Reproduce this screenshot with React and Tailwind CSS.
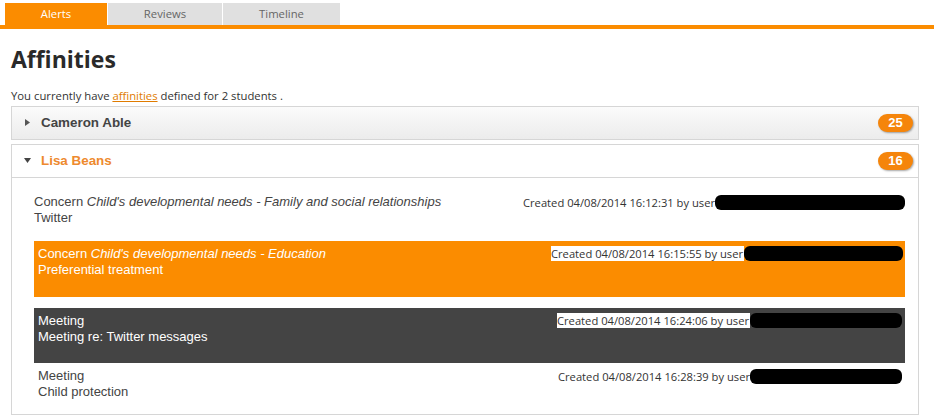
import React from "react";

const seg = { fontFamily: '"Open Sans", "Noto Sans", sans-serif' };
const ar = { fontFamily: '"Liberation Sans", Arial, sans-serif' };

const Redact = ({ w }) => (
  <span className="inline-block h-[15px] bg-black rounded-[6px]" style={{ width: w }} />
);

const Created = ({ stamp, blob, boxed }) => (
  <div className="flex items-center" style={seg}>
    <span
      className={
        "text-[11.2px] leading-[15px] text-[#333] whitespace-nowrap " +
        (boxed ? "bg-white pr-[1px]" : "")
      }
    >
      Created {stamp} by user
    </span>
    <Redact w={blob} />
  </div>
);

const Badge = ({ n }) => (
  <span
    className="inline-flex items-center justify-center w-[35px] h-[18px] rounded-full bg-[#f5850b] text-white text-[13px] font-bold shadow-[1px_1px_2px_rgba(0,0,0,0.35)]"
    style={ar}
  >
    {n}
  </span>
);

export default function App() {
  return (
    <div className="w-[934px] h-[420px] bg-white overflow-hidden">
      {/* tabs */}
      <div className="flex pt-[3px] pl-[5px] gap-[1px]" style={seg}>
        <div className="w-[102px] h-[22px] bg-[#fb8c00] text-white text-[11.3px] flex items-center justify-center">
          Alerts
        </div>
        <div className="w-[114px] h-[22px] bg-[#e0e0e0] text-[#666] text-[11.3px] flex items-center justify-center">
          Reviews
        </div>
        <div className="w-[117px] h-[22px] bg-[#e0e0e0] text-[#666] text-[11.3px] flex items-center justify-center">
          Timeline
        </div>
      </div>
      <div className="h-[4px] bg-[#fb8c00]" />

      <div className="pl-[11px] pr-[15px]">
        <h1 className="text-[23px] font-bold text-[#2a2a2a] mt-[15px] leading-[30px]" style={seg}>
          Affinities
        </h1>
        <p className="text-[11.3px] text-[#333] mt-[14px] leading-[15px]" style={seg}>
          You currently have{" "}
          <span className="text-[#e07b00] underline">affinities</span> defined for 2 students .
        </p>

        {/* Cameron */}
        <div className="mt-[3px] h-[34px] border border-[#d6d6d6] bg-gradient-to-b from-[#fbfbfb] to-[#ececec] flex items-center justify-between pl-[13px] pr-[5px]">
          <div className="flex items-center gap-[11px]">
            <svg width="5" height="7" viewBox="0 0 5 7">
              <path d="M0 0L5 3.5L0 7Z" fill="#555" />
            </svg>
            <span className="text-[13.4px] font-bold text-[#444]" style={ar}>
              Cameron Able
            </span>
          </div>
          <Badge n="25" />
        </div>

        {/* Lisa */}
        <div className="mt-[4px] border border-[#d6d6d6]">
          <div className="h-[33px] border-b border-[#d6d6d6] flex items-center justify-between pl-[12px] pr-[5px]">
            <div className="flex items-center gap-[10px]">
              <svg width="7" height="5" viewBox="0 0 7 5">
                <path d="M0 0L7 0L3.5 5Z" fill="#444" />
              </svg>
              <span className="text-[13.4px] font-bold text-[#ee8a2e]" style={ar}>
                Lisa Beans
              </span>
            </div>
            <Badge n="16" />
          </div>

          <div className="pl-[22px] pr-[13px] pt-[16px] pb-[14px]">
            <div className="flex justify-between h-[47px]">
              <div className="text-[13px] leading-[16px] text-[#444]" style={ar}>
                <div>
                  Concern <i>Child's developmental needs - Family and social relationships</i>
                </div>
                <div>Twitter</div>
              </div>
              <div className="pt-[1px]">
                <Created stamp="04/08/2014 16:12:31" blob={190} />
              </div>
            </div>

            <div className="h-[56px] bg-[#fb8c00] flex justify-between pl-[4px] pr-[2px] pt-[5px]">
              <div className="text-[13px] leading-[16px] text-white" style={ar}>
                <div>
                  Concern <i>Child's developmental needs - Education</i>
                </div>
                <div>Preferential treatment</div>
              </div>
              <div>
                <Created stamp="04/08/2014 16:15:55" blob={159} boxed />
              </div>
            </div>

            <div className="h-[55px] mt-[11px] bg-[#444] flex justify-between pl-[4px] pr-[3px] pt-[5px]">
              <div className="text-[13px] leading-[16px] text-white" style={ar}>
                <div>Meeting</div>
                <div>Meeting re: Twitter messages</div>
              </div>
              <div>
                <Created stamp="04/08/2014 16:24:06" blob={152} boxed />
              </div>
            </div>

            <div className="flex justify-between pl-[4px] pr-[3px] pt-[5px]">
              <div className="text-[13px] leading-[16px] text-[#444]" style={ar}>
                <div>Meeting</div>
                <div>Child protection</div>
              </div>
              <div className="pt-[1px]">
                <Created stamp="04/08/2014 16:28:39" blob={152} />
              </div>
            </div>
          </div>
        </div>
      </div>
    </div>
  );
}
